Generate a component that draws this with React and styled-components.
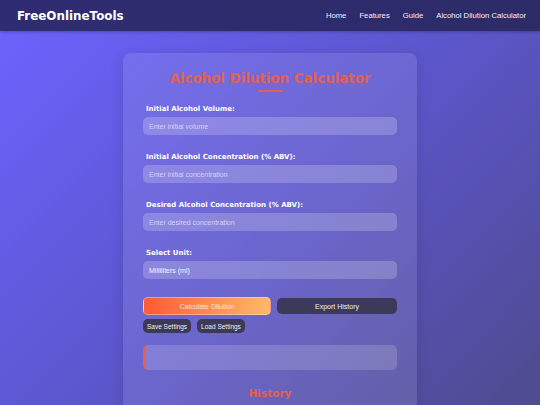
import styled, { createGlobalStyle } from "styled-components";

const Global = createGlobalStyle`
  html, body {
    margin: 0;
    padding: 0;
    height: 100%;
  }
  body {
    background: #5b55c8;
    font-family: "Liberation Sans", Arial, sans-serif;
    color: #fff;
    overflow: hidden;
  }
`;

const Page = styled.div`
  width: 540px;
  height: 405px;
  overflow: hidden;
  background: linear-gradient(135deg, #6c63ff 0%, #5b55c8 55%, #4f4b8d 100%);
`;

const Header = styled.header`
  height: 31px;
  display: flex;
  align-items: center;
  justify-content: space-between;
  padding: 0 14px 0 17px;
  background: linear-gradient(90deg, #2f2c72, #2e2b69);
  box-shadow: 0 1px 3px rgba(0, 0, 0, 0.25);
`;

const Logo = styled.div`
  font-family: "DejaVu Sans", Verdana, sans-serif;
  font-weight: bold;
  font-size: 11.9px;
  color: #fff;
`;

const Nav = styled.nav`
  display: flex;
  gap: 13px;
`;

const NavLink = styled.a`
  font-size: 7.7px;
  color: #f0f0ff;
  text-decoration: none;
  &:visited,
  &:hover {
    color: #f0f0ff;
  }
`;

const Card = styled.main`
  width: 254px;
  margin: 22px auto 0;
  padding: 17px 20px 20px;
  background: rgba(255, 255, 255, 0.1);
  border-radius: 8px;
  box-shadow: 0 4px 14px rgba(0, 0, 0, 0.12);
`;

const Title = styled.h1`
  margin: 0;
  text-align: center;
  font-family: "DejaVu Sans", Verdana, sans-serif;
  font-weight: bold;
  font-size: 13.4px;
  color: #e5604e;
  line-height: 17px;
`;

const Underline = styled.div`
  width: 25px;
  height: 2px;
  margin: 3px auto 13px;
  background: #e5604e;
  border-radius: 1px;
`;

const Group = styled.div`
  display: flex;
  flex-direction: column;
  margin-bottom: ${(p) => p.$gap || 18}px;
`;

const Label = styled.label`
  font-family: "DejaVu Sans", Verdana, sans-serif;
  font-weight: bold;
  font-size: 7px;
  line-height: 9px;
  padding-left: 3px;
  margin-bottom: 3px;
  color: #fff;
`;

const Field = styled.div`
  height: 18px;
  display: flex;
  align-items: center;
  padding: 0 6px;
  border-radius: 5px;
  background: rgba(255, 255, 255, 0.2);
  font-size: 7px;
  color: ${(p) => (p.$value ? "#f4f4ff" : "rgba(235, 235, 255, 0.75)")};
`;

const ButtonRow = styled.div`
  display: flex;
  gap: 6px;
  align-items: center;
`;

const Button = styled.button`
  height: ${(p) => (p.$primary ? 18 : 16)}px;
  flex: ${(p) => p.$flex || "none"};
  padding: 0 5px;
  border: ${(p) => (p.$primary ? "1px solid rgba(255,255,255,0.35)" : "none")};
  border-radius: 5px;
  background: ${(p) =>
    p.$primary ? "linear-gradient(90deg, #ff5a36, #ffb86c)" : "#3c3a58"};
  color: ${(p) => (p.$primary ? "#ffe9dc" : "#f0f0f8")};
  font-family: "Liberation Sans", Arial, sans-serif;
  font-size: 7px;
  cursor: pointer;
`;

const SmallRow = styled.div`
  display: flex;
  gap: 6px;
  margin-top: 4px;
`;

const SmallButton = styled.button`
  height: 14px;
  padding: 0 4px;
  border: none;
  border-radius: 5px;
  background: #3c3a58;
  color: #f0f0f8;
  font-family: "Liberation Sans", Arial, sans-serif;
  font-size: 6.5px;
`;

const Result = styled.div`
  height: 25px;
  margin-top: 12px;
  border-radius: 5px;
  border-left: 3px solid #e5604e;
  background: rgba(255, 255, 255, 0.16);
`;

const History = styled.h2`
  margin: 17px 0 0;
  text-align: center;
  font-family: "DejaVu Sans", Verdana, sans-serif;
  font-weight: bold;
  font-size: 10.5px;
  color: #e5604e;
`;

export default function App() {
  return (
    <Page>
      <Global />
      <Header>
        <Logo>FreeOnlineTools</Logo>
        <Nav>
          <NavLink href="#">Home</NavLink>
          <NavLink href="#">Features</NavLink>
          <NavLink href="#">Guide</NavLink>
          <NavLink href="#">Alcohol Dilution Calculator</NavLink>
        </Nav>
      </Header>
      <Card>
        <Title>Alcohol Dilution Calculator</Title>
        <Underline />
        <Group>
          <Label>Initial Alcohol Volume:</Label>
          <Field>Enter initial volume</Field>
        </Group>
        <Group>
          <Label>Initial Alcohol Concentration (% ABV):</Label>
          <Field>Enter initial concentration</Field>
        </Group>
        <Group>
          <Label>Desired Alcohol Concentration (% ABV):</Label>
          <Field>Enter desired concentration</Field>
        </Group>
        <Group $gap={18}>
          <Label>Select Unit:</Label>
          <Field $value>Milliliters (ml)</Field>
        </Group>
        <ButtonRow>
          <Button $primary $flex="0 0 128px">Calculate Dilution</Button>
          <Button $flex="1">Export History</Button>
        </ButtonRow>
        <SmallRow>
          <SmallButton>Save Settings</SmallButton>
          <SmallButton>Load Settings</SmallButton>
        </SmallRow>
        <Result />
        <History>History</History>
      </Card>
    </Page>
  );
}
